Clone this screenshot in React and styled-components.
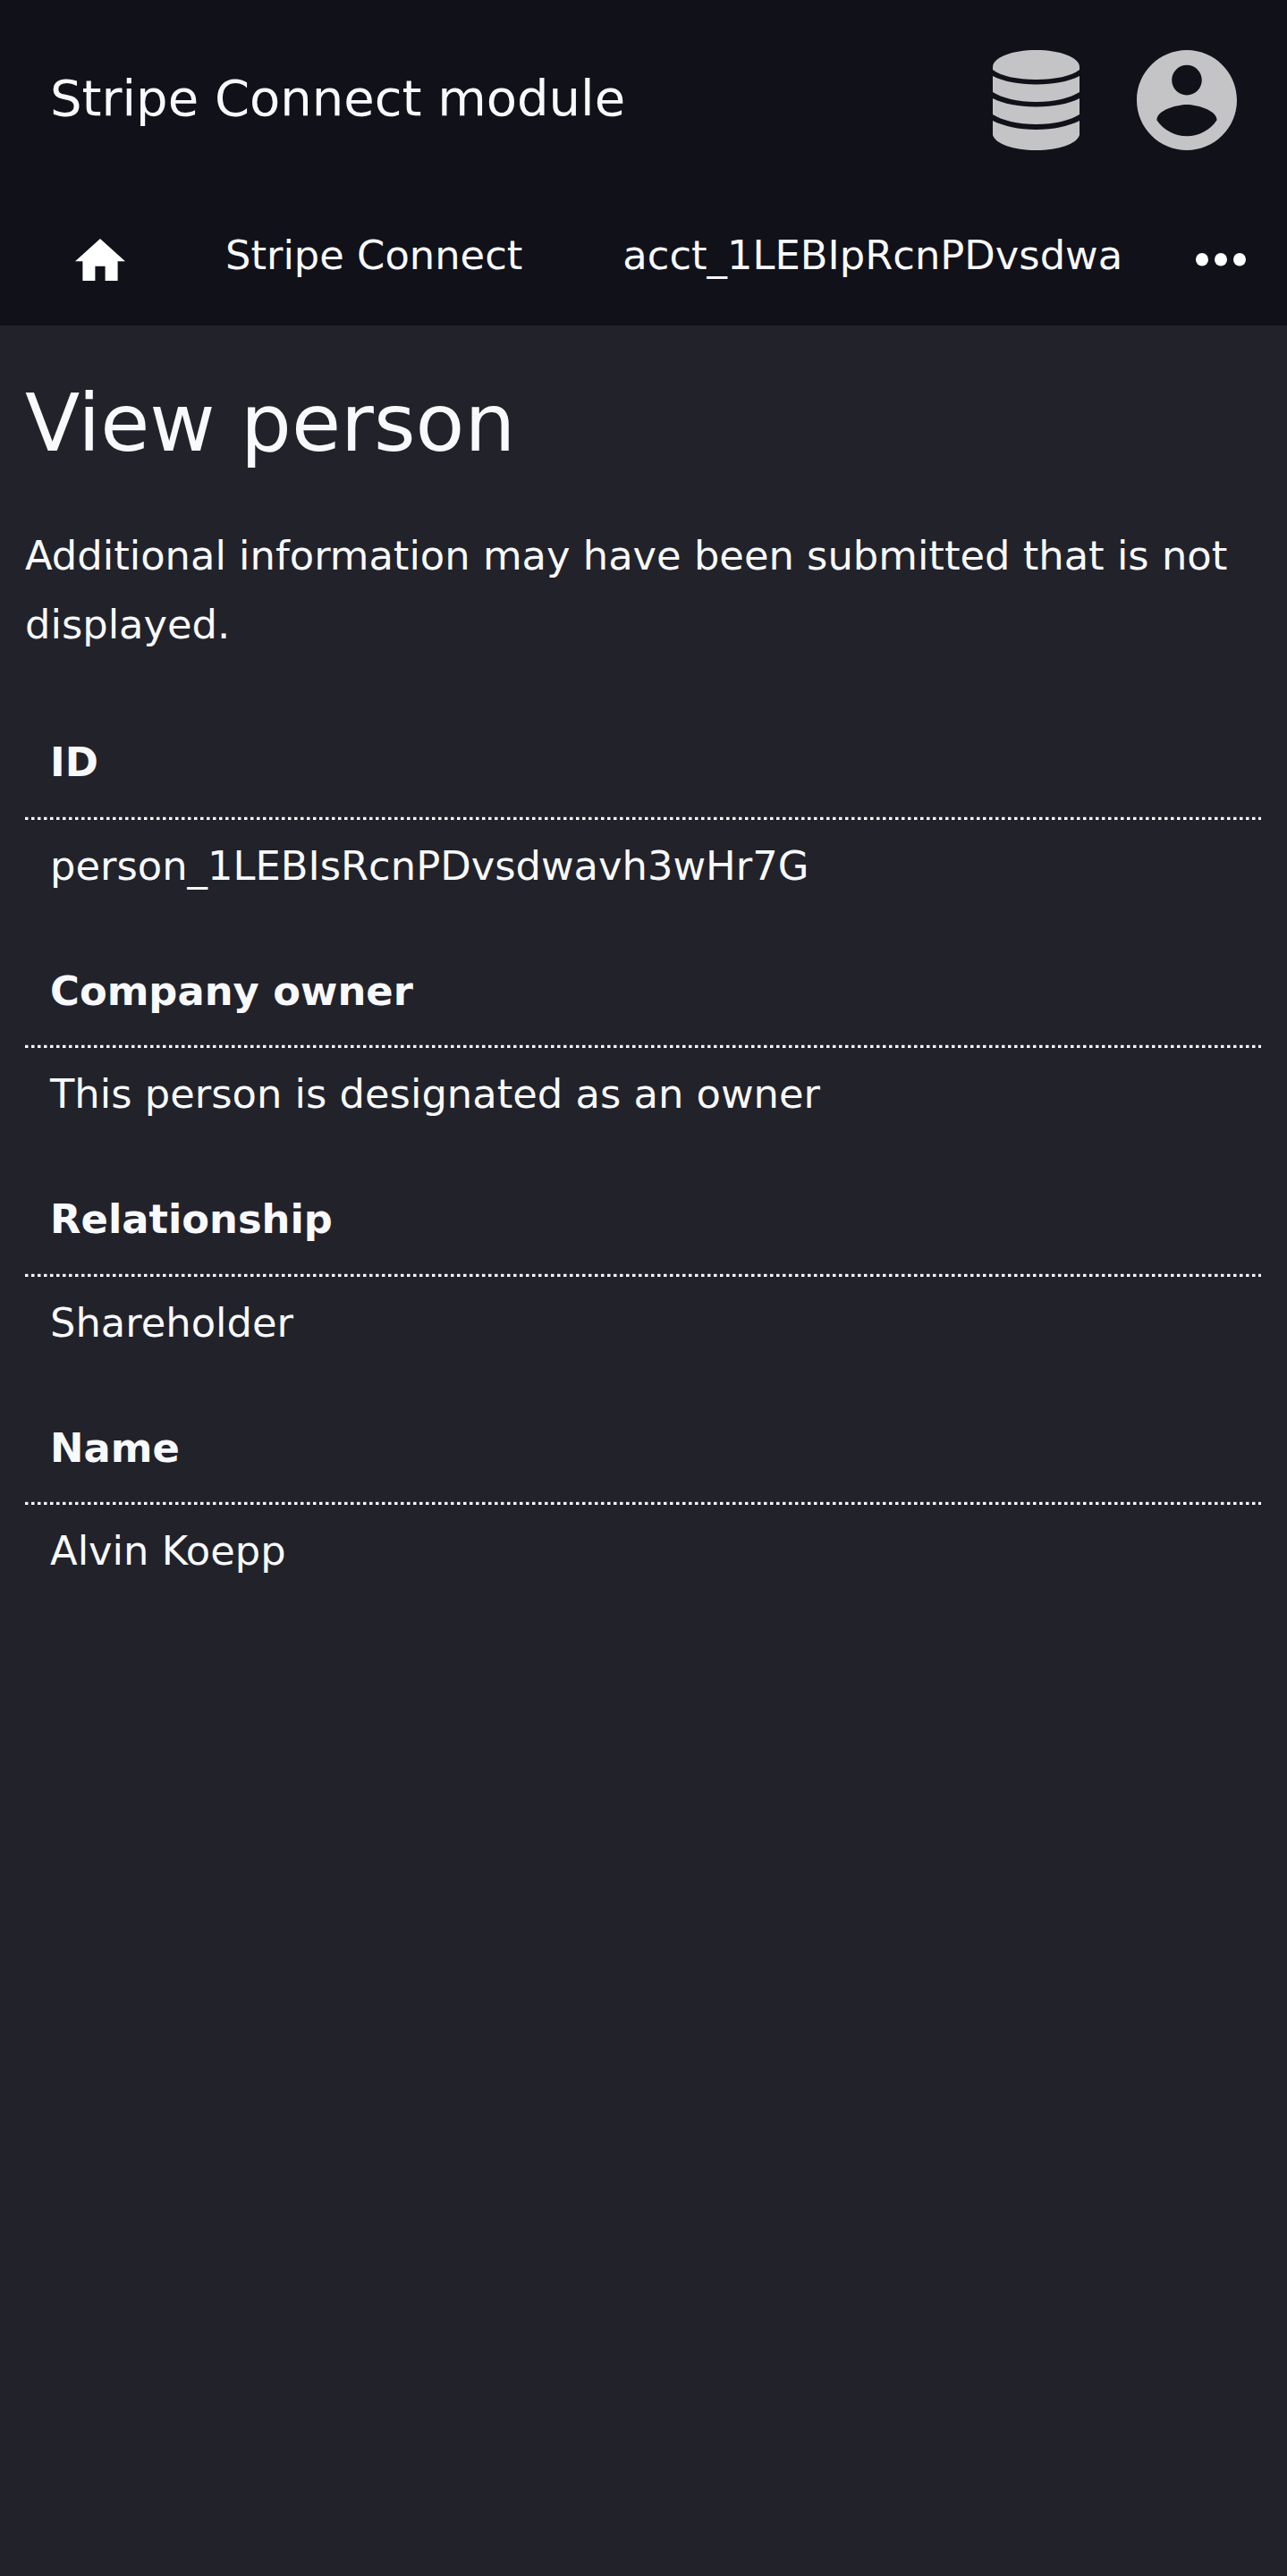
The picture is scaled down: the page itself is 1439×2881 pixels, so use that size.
import React from 'react';
import styled, { createGlobalStyle } from 'styled-components';

const GlobalStyle = createGlobalStyle`
  * { box-sizing: border-box; }
  body {
    margin: 0;
    background: #22222a;
    color: #f8f9fc;
    font-family: "DejaVu Sans", sans-serif;
    font-size: 44.8px;
    line-height: 77px;
  }
`;

const Page = styled.div`
  min-height: 2881px;
  background: #22222a;
`;

const Header = styled.header`
  height: 364px;
  background: #11111a;
`;

const TopBar = styled.div`
  display: flex;
  align-items: center;
  justify-content: space-between;
  height: 224px;
  padding: 0 56px;
`;

const ModuleTitle = styled.div`
  font-size: 56px;
  line-height: 85px;
  padding-bottom: 5px;
`;

const Actions = styled.div`
  display: flex;
  gap: 64px;
  color: #c4c4c6;
`;

const Icon = styled.svg`
  display: block;
  flex: none;
  width: ${(p) => p.$w}px;
  height: ${(p) => p.$h}px;
  fill: currentColor;
`;

const Nav = styled.nav`
  display: flex;
  align-items: center;
  height: 133px;
  padding: 0 46px 0 84px;
  color: #ffffff;
`;

const Crumb = styled.a`
  margin-left: ${(p) => p.$gap}px;
  padding-bottom: 10px;
  color: #f8f9fc;
  white-space: nowrap;
`;

const More = styled.span`
  margin-left: auto;
`;

const Content = styled.main`
  padding: 55px 28px 0;
`;

const Heading = styled.h1`
  margin: 0;
  font-size: 89.6px;
  font-weight: 400;
  line-height: 108px;
`;

const Note = styled.p`
  margin: 56px 0 0;
`;

const Details = styled.dl`
  margin: 50px 0 0;
`;

const Field = styled.div`
  height: 255.4px;
`;

const Label = styled.dt`
  height: 126px;
  padding: 27.4px 28px 0;
  font-weight: 700;
`;

const Rule = styled.div`
  height: 4px;
  width: 1382px;
  background:
    linear-gradient(rgba(34, 34, 42, 0.82) 0 1px, transparent 1px),
    repeating-linear-gradient(90deg, #f8f9fc 0 3px, #8d8e93 3px 4px, #22222a 4px 7px);
`;

const Value = styled.dd`
  margin: 0;
  padding: 13px 28px 0;
`;

const fields = [
  ['ID', 'person_1LEBIsRcnPDvsdwavh3wHr7G'],
  ['Company owner', 'This person is designated as an owner'],
  ['Relationship', 'Shareholder'],
  ['Name', 'Alvin Koepp'],
];

const DatabaseIcon = () => (
  <Icon $w={97} $h={112} viewBox="0 0 97 112">
    <path d="M0 19C0 8 22 0 48.500 0S97 8 97 19V22C88 29 70 33 48.500 33S9 29 0 22Z" />
    <path d="M0 29C12 35 29 38.500 48.500 38.500S85 35 97 29V47C87 53.500 69 58 48.500 58S10 53.500 0 47Z" />
    <path d="M0 54C12 60 29 63.500 48.500 63.500S85 60 97 54V72C87 78.500 69 83 48.500 83S10 78.500 0 72Z" />
    <path d="M0 79C12 85 29 89 48.500 89S85 85 97 79V95C94 105 74 112 48.500 112S3 105 0 95Z" />
  </Icon>
);

const AccountIcon = () => (
  <Icon $w={112} $h={112} viewBox="2 2 20 20">
    <path d="M12 2C6.480 2 2 6.480 2 12s4.480 10 10 10 10-4.480 10-10S17.520 2 12 2zm0 3c1.660 0 3 1.340 3 3s-1.340 3-3 3-3-1.340-3-3 1.340-3 3-3zm0 14.200c-2.500 0-4.710-1.280-6-3.220.03-1.990 4-3.080 6-3.080 1.990 0 5.970 1.090 6 3.080-1.290 1.940-3.500 3.220-6 3.220z" />
  </Icon>
);

const HomeIcon = () => (
  <Icon $w={56} $h={47.6} viewBox="2 3 20 17">
    <path d="M10 20v-6h4v6h5v-8h3L12 3 2 12h3v8z" />
  </Icon>
);

const MoreIcon = () => (
  <Icon $w={56} $h={14.5} viewBox="4 10 16 4" preserveAspectRatio="none">
    <circle cx="6" cy="12" r="2" />
    <circle cx="12" cy="12" r="2" />
    <circle cx="18" cy="12" r="2" />
  </Icon>
);

export default function App() {
  return (
    <Page>
      <GlobalStyle />
      <Header>
        <TopBar>
          <ModuleTitle>Stripe Connect module</ModuleTitle>
          <Actions>
            <DatabaseIcon />
            <AccountIcon />
          </Actions>
        </TopBar>
        <Nav>
          <HomeIcon />
          <Crumb $gap={112}>Stripe Connect</Crumb>
          <Crumb $gap={112}>acct_1LEBIpRcnPDvsdwa</Crumb>
          <More><MoreIcon /></More>
        </Nav>
      </Header>
      <Content>
        <Heading>View person</Heading>
        <Note>Additional information may have been submitted that is not displayed.</Note>
        <Details>
          {fields.map(([label, value]) => (
            <Field key={label}>
              <Label>{label}</Label>
              <Rule />
              <Value>{value}</Value>
            </Field>
          ))}
        </Details>
      </Content>
    </Page>
  );
}
